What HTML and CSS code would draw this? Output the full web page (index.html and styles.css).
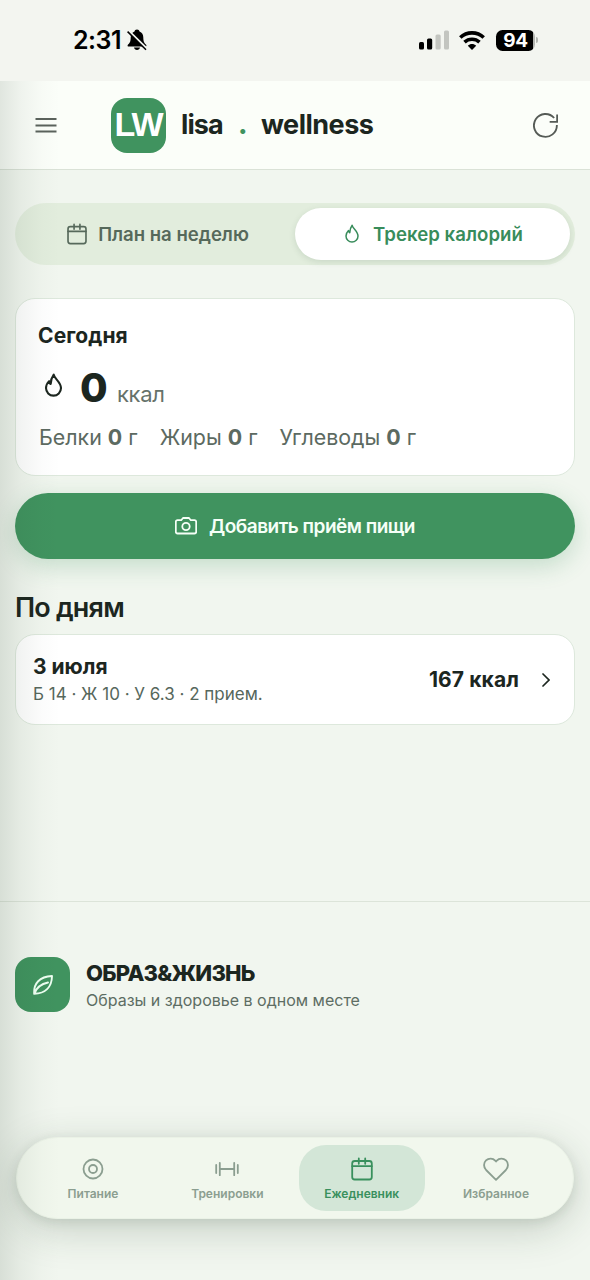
FILE: index.html
```html
<!DOCTYPE html>
<html lang="ru">
<head>
<meta charset="utf-8">
<title>lisa.wellness</title>
<link rel="stylesheet" href="styles.css">
</head>
<body>
<svg class="sprite" aria-hidden="true">
  <symbol id="calendar" viewBox="0 0 24 24"><rect x="2.200" y="4" width="19.600" height="18.500" rx="2.500"/><path d="M2.200 9.200h19.600M8.800 1.500v5.300M15.200 1.500v5.300"/></symbol>
  <symbol id="flame" viewBox="0 0 24 24"><path d="M12.200 1.500c.4 3.800 7 7 7 13a7.200 7.200 0 0 1-14.400 0c0-3 1.300-5 3-6.700.1 1.400.6 2.300 1.500 2.700C9.400 7 10.500 3.800 12.200 1.500z"/></symbol>
</svg>
<div class="status">
  <div class="status-left"><span class="time">2:31</span>
    <svg class="bell" viewBox="0 0 20 22"><path d="M10 .5c-1.500 0-2.300.9-2.500 2C4.900 3.400 3.700 5.600 3.700 8.500c0 4.500-1.200 5.700-3 7.500-.4 1 .1 1.500 1 1.500h16.600c.9 0 1.400-.5 1-1.500-1.800-1.800-3-3-3-7.500 0-2.900-1.200-5.100-3.800-6-.2-1.100-1-2-2.500-2zM7 18.500h6c-.3 1.600-1.400 2.500-3 2.500s-2.700-.9-3-2.500z"/><path class="bell-gap" d="M1 1.500 20 20"/><path class="bell-slash" d="M.6 2.600 19 20.800"/></svg>
  </div>
  <div class="status-right">
    <svg class="signal" viewBox="0 0 30 20"><rect y="12" width="5" height="7.500" rx="1.500"/><rect x="8" y="8.500" width="5.200" height="11" rx="1.500"/><rect class="dim" x="16.500" y="4.500" width="5.200" height="15" rx="1.500"/><rect class="dim" x="25" y=".5" width="5" height="19" rx="1.500"/></svg>
    <svg class="wifi" viewBox="0 0 26 19"><path class="wave" d="M1.300 6.500c6.500-6.200 16.900-6.200 23.400 0M5.500 11.100c4.300-3.900 10.700-3.900 15 0"/><path d="M13 19l-4.200-4.300c2.400-2.300 6-2.300 8.400 0z"/></svg>
    <div class="battery"><span class="level">94</span><span class="nub"></span></div>
  </div>
</div>
<header class="header">
  <svg class="menu" viewBox="0 0 22 16"><path d="M.5 2h21M.5 8.500h21M.5 14.500h21"/></svg>
  <div class="logo">LW</div>
  <div class="brand"><span class="b-lisa">lisa</span><span class="dot">.</span><span class="b-well">wellness</span></div>
  <svg class="refresh" viewBox="0 0 24 24"><path d="M22.900 11.500A11 11 0 1 1 20.300 4.800M23.200 1.500v7H16"/></svg>
</header>
<main class="main">
  <div class="tabs">
    <div class="tab"><svg class="icon i-cal"><use href="#calendar"/></svg><span class="t-plan">План на неделю</span></div>
    <div class="tab tab-active"><svg class="icon i-flame"><use href="#flame"/></svg><span class="t-track">Трекер калорий</span></div>
  </div>
  <section class="card today">
    <h2 class="today-title"><span>Сегодня</span></h2>
    <div class="total"><svg class="icon flame-big"><use href="#flame"/></svg><b class="zero">0</b><span class="unit">ккал</span></div>
    <div class="macros"><span>Белки <b>0</b> г</span><span>Жиры <b>0</b> г</span><span>Углеводы <b>0</b> г</span></div>
  </section>
  <div class="add"><svg class="icon i-cam" viewBox="0 0 22 18"><path d="M2.500 3.200h3.700L8 1h6l1.800 2.200h3.700a1.700 1.700 0 0 1 1.700 1.700v9.900a1.700 1.700 0 0 1-1.700 1.700h-17a1.700 1.700 0 0 1-1.700-1.700V4.900a1.700 1.700 0 0 1 1.700-1.700z"/><circle cx="11" cy="9.500" r="3.700"/></svg><span>Добавить приём пищи</span></div>
  <h1 class="days"><span>По дням</span></h1>
  <div class="card day">
    <div class="day-info"><div class="date"><span>3 июля</span></div><div class="detail"><span>Б 14 · Ж 10 · У 6.3 · 2 прием.</span></div></div>
    <span class="kcal">167 ккал</span>
    <svg class="chevron" viewBox="0 0 8 14"><path d="M1 1l6 6-6 6"/></svg>
  </div>
</main>
<footer class="footer">
  <div class="leaf-box"><svg class="icon leaf" viewBox="0 0 20 20"><path d="M1.200 18.800C.5 8.500 6.500 1.500 19 1 18.800 12.500 12 18.500 1.200 18.800zM1.200 18.800C3.500 12.500 7.500 9 15 7.500"/></svg></div>
  <div class="about"><div class="about-title"><span>ОБРАЗ&amp;ЖИЗНЬ</span></div><div class="about-sub"><span>Образы и здоровье в одном месте</span></div></div>
</footer>
<nav class="nav">
  <div class="item"><svg class="icon nav-icon" viewBox="0 0 24 24"><circle cx="12" cy="12" r="9.500"/><circle cx="12" cy="12" r="4"/></svg><span class="n1">Питание</span></div>
  <div class="item"><svg class="icon nav-icon" viewBox="0 0 24 24"><path d="M1.200 8v8M4.800 5.800v12.400M4.800 12h14.400M19.200 5.800v12.400M22.800 8v8"/></svg><span class="n2">Тренировки</span></div>
  <div class="item item-active"><svg class="icon nav-icon"><use href="#calendar"/></svg><span class="n3">Ежедневник</span></div>
  <div class="item"><svg class="icon nav-icon heart" viewBox="0 0 26 24"><path d="M13 22.800 3.100 13C.4 10.200.4 6 3 3.400c2.600-2.500 6.800-2.500 9.200.2l.8.9.8-.9c2.400-2.700 6.600-2.700 9.200-.2 2.600 2.600 2.600 6.800-.1 9.600z"/></svg><span class="n4">Избранное</span></div>
</nav>
<div class="edge"></div>
</body>
</html>
```
FILE: styles.css
```css
* { box-sizing: border-box; }
body { margin: 0; width: 590px; height: 1280px; overflow: hidden; display: flex; flex-direction: column; position: relative; background: #f1f6ef; color: #1c261f; font-family: Inter, "Noto Sans", sans-serif; }
h1, h2 { margin: 0; }
span, b { white-space: nowrap; }
.sprite { position: absolute; width: 0; height: 0; }
.icon { fill: none; stroke: currentColor; stroke-width: 1.8; stroke-linecap: round; stroke-linejoin: round; flex: none; }

.status { height: 81px; flex: none; background: #f3f5f0; display: flex; justify-content: space-between; padding: 28px 52px 0 73px; color: #000; }
.status-left, .status-right { display: flex; height: 24px; align-items: center; }
.time { font-size: 25px; font-weight: 600; letter-spacing: -.5px; }
.bell { width: 20px; height: 22px; margin-left: 6px; }
.bell-gap { stroke: #f3f5f0; stroke-width: 2.500; }
.bell-slash { stroke: #000; stroke-width: 1.500; }
.signal { width: 30px; height: 20px; }
.dim { fill: #c3c5c0; }
.wifi { width: 26px; height: 19px; margin-left: 10px; }
.wave { fill: none; stroke: #000; stroke-width: 3.600; }
.battery { display: flex; align-items: center; margin-left: 11px; }
.level { width: 39px; height: 21px; border-radius: 6.500px; background: linear-gradient(90deg, #000 94%, #b4b6b1 94%); color: #fff; font-size: 19px; font-weight: 700; line-height: 21px; text-align: center; letter-spacing: -.3px; }
.nub { width: 2px; height: 6px; margin-left: 1px; border-radius: 0 2px 2px 0; background: #b4b6b1; }

.header { height: 89px; flex: none; background: #fbfef9; border-bottom: 1px solid #dae2d7; display: flex; align-items: center; padding: 0 32px 0 35px; }
.menu { width: 22px; height: 16px; fill: none; stroke: #5b625c; stroke-width: 1.800; }
.logo { width: 55px; height: 55px; margin-left: 54px; border-radius: 16px; background: #40935f; color: #fff; font-family: "Liberation Sans", Inter, sans-serif; font-size: 34px; font-weight: 700; line-height: 53px; text-align: center; letter-spacing: -2px; text-indent: -1px; }
.brand { display: flex; margin: -2px 0 0 15px; font-size: 27px; font-weight: 700; letter-spacing: -.9px; flex: 1; }
.b-lisa { width: 57px; }
.dot { width: 23px; color: #40935f; font-weight: 800; }
.b-well { letter-spacing: -.5px; }
.refresh { width: 25px; height: 25px; fill: none; stroke: #555b56; stroke-width: 1.800; }

.main { display: flex; flex-direction: column; padding: 33px 15px 0; height: 732px; flex: none; border-bottom: 1px solid #dce4d9; }
.tabs { height: 62px; padding: 5px; border-radius: 31px; background: #e2eddd; display: grid; grid-template-columns: 1fr 1fr; font-size: 18.600px; font-weight: 600; color: #56695b; }
.tab { display: flex; align-items: center; justify-content: center; gap: 10px; border-radius: 26px; }
.t-plan { letter-spacing: -.02px; }
.t-track { letter-spacing: .05px; }
.tab-active { background: #fff; color: #388c5b; box-shadow: 0 2px 6px rgba(40, 80, 50, .13); }
.i-cal { width: 22px; height: 22px; }
.i-flame { width: 20px; height: 20px; margin-right: 1px; }
.card { background: #fff; border: 1px solid #dde8dc; border-radius: 20px; }
.today { margin-top: 33px; height: 178px; padding: 23px 22px 0; }
.today-title { font-size: 21px; line-height: 28px; font-weight: 700; letter-spacing: .1px; }
.total { display: flex; align-items: baseline; height: 52px; margin-top: 12px; }
.flame-big { width: 25px; height: 25px; margin: 11px 14px 0 3px; align-self: flex-start; stroke-width: 2; }
.zero { font-size: 40px; line-height: 52px; width: 37px; font-weight: 800; }
.unit { font-size: 22px; letter-spacing: -.3px; color: #66726a; }
.macros { display: flex; gap: 22px; font-size: 21.400px; line-height: 28px; margin-top: 9px; padding-left: 1px; color: #5c6a61; }
.add { height: 66px; margin-top: 17px; border-radius: 33px; background: #40935f; color: #f5fff7; display: flex; align-items: center; justify-content: center; gap: 12px; font-size: 19px; font-weight: 600; letter-spacing: -.5px; box-shadow: 0 7px 24px rgba(50, 140, 85, .24); }
.i-cam { width: 22px; height: 18px; }
.days { margin-top: 32px; font-size: 27px; line-height: 34px; font-weight: 600; letter-spacing: -.8px; }
.day { height: 91px; margin-top: 9px; display: flex; align-items: center; padding: 0 24px 0 17px; }
.day-info { flex: 1; padding-top: 1px; }
.date { font-size: 21px; font-weight: 700; line-height: 28px; }
.detail { font-size: 17px; line-height: 26px; color: #56675c; }
.kcal { font-size: 21px; font-weight: 700; letter-spacing: .1px; }
.chevron { width: 8px; height: 14px; margin-left: 23px; fill: none; stroke: #1c261f; stroke-width: 1.700; stroke-linecap: round; }

.footer { display: flex; padding: 55px 15px 0; height: 235px; flex: none; }
.leaf-box { width: 55px; height: 55px; border-radius: 16px; background: #40935f; color: #eefff2; display: flex; align-items: center; justify-content: center; }
.leaf { width: 20px; height: 20px; stroke-width: 1.900; }
.about { margin-left: 16px; padding-top: 1px; }
.about-title { font-size: 22px; font-weight: 800; line-height: 30px; letter-spacing: -.75px; }
.about-sub { font-size: 16px; line-height: 24px; color: #5d6d63; }

.nav { width: 558px; height: 82px; flex: none; margin-left: 16px; padding: 7px 14px 7px 13px; border: 1px solid #eaf2e6; border-radius: 41px; background: #f1f7ed; display: grid; grid-template-columns: repeat(4, 126px); justify-content: space-between; box-shadow: 0 10px 40px rgba(35, 60, 40, .21), 0 3px 12px rgba(35, 60, 40, .1); color: #8b9e90; font-size: 12px; font-weight: 600; }
.item { height: 66px; padding-top: 12px; border-radius: 27px; display: flex; flex-direction: column; align-items: center; gap: 4px; line-height: 18px; }
.item-active { background: #d3e6d7; color: #39905d; }
.nav-icon { width: 24px; height: 24px; }
.heart { width: 26px; height: 24px; }
.edge { position: absolute; left: 0; top: 81px; width: 60px; height: 1199px; background: linear-gradient(90deg, rgba(30, 55, 35, .12), rgba(30, 55, 35, .055) 35%, rgba(30, 55, 35, .015) 70%, transparent); pointer-events: none; }
```
